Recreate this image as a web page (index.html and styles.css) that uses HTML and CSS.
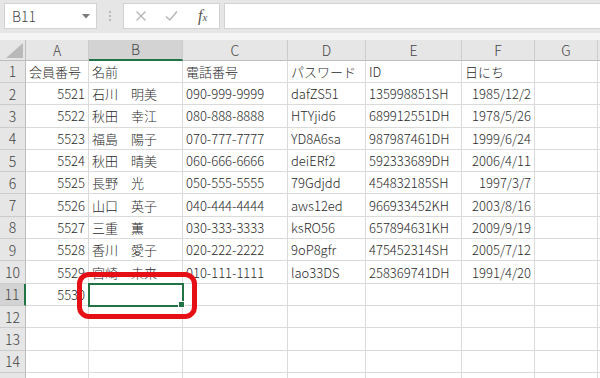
FILE: index.html
```html
<!DOCTYPE html>
<html lang="ja">
<head>
    <meta charset="UTF-8">
    <title>会員名簿</title>
    <link rel="stylesheet" href="styles.css">
</head>
<body>
    <div class="toolbar">
        <div class="name-box">
            <span>B11</span>
            <svg class="drop" width="8" height="5" viewBox="0 0 8 5"><polygon points="0,0 8,0 4,4.5" fill="#7a7a7a"/></svg>
        </div>
        <div class="grip">
            <svg width="4" height="12" viewBox="0 0 4 12"><circle cx="2" cy="2" r="1" fill="#a8a8a8"/><circle cx="2" cy="6" r="1" fill="#a8a8a8"/><circle cx="2" cy="10" r="1" fill="#a8a8a8"/></svg>
        </div>
        <div class="fx-box">
            <svg width="12" height="12" viewBox="0 0 12 12"><path d="M1.5 1.5 L10.5 10.5 M10.5 1.5 L1.5 10.5" stroke="#b4b4b4" stroke-width="1.3" fill="none"/></svg>
            <svg width="13" height="12" viewBox="0 0 13 12"><path d="M1 6.5 L4.8 10 L12 1.5" stroke="#b4b4b4" stroke-width="1.4" fill="none"/></svg>
            <span class="fx">f<span>x</span></span>
        </div>
        <div class="formula"></div>
    </div>
    <div class="gap"></div>

    <div class="sheet-wrap">
        <div class="sheet">
            <div class="corner"><svg width="17" height="15" viewBox="0 0 17 15"><polygon points="17,0 17,15 0,15" fill="#b9b9b9"/></svg></div>
            <div class="ch">A</div><div class="ch sel">B</div><div class="ch">C</div><div class="ch">D</div><div class="ch">E</div><div class="ch">F</div><div class="ch">G</div><div class="ch"></div>

            <div class="rh">1</div><div class="c">会員番号</div><div class="c">名前</div><div class="c">電話番号</div><div class="c">パスワード</div><div class="c">ID</div><div class="c">日にち</div><div class="c"></div><div class="c"></div>
            <div class="rh">2</div><div class="c r">5521</div><div class="c">石川　明美</div><div class="c">090-999-9999</div><div class="c">dafZS51</div><div class="c">135998851SH</div><div class="c r">1985/12/2</div><div class="c"></div><div class="c"></div>
            <div class="rh">3</div><div class="c r">5522</div><div class="c">秋田　幸江</div><div class="c">080-888-8888</div><div class="c">HTYjid6</div><div class="c">689912551DH</div><div class="c r">1978/5/26</div><div class="c"></div><div class="c"></div>
            <div class="rh">4</div><div class="c r">5523</div><div class="c">福島　陽子</div><div class="c">070-777-7777</div><div class="c">YD8A6sa</div><div class="c">987987461DH</div><div class="c r">1999/6/24</div><div class="c"></div><div class="c"></div>
            <div class="rh">5</div><div class="c r">5524</div><div class="c">秋田　晴美</div><div class="c">060-666-6666</div><div class="c">deiERf2</div><div class="c">592333689DH</div><div class="c r">2006/4/11</div><div class="c"></div><div class="c"></div>
            <div class="rh">6</div><div class="c r">5525</div><div class="c">長野　光</div><div class="c">050-555-5555</div><div class="c">79Gdjdd</div><div class="c">454832185SH</div><div class="c r">1997/3/7</div><div class="c"></div><div class="c"></div>
            <div class="rh">7</div><div class="c r">5526</div><div class="c">山口　英子</div><div class="c">040-444-4444</div><div class="c">aws12ed</div><div class="c">966933452KH</div><div class="c r">2003/8/16</div><div class="c"></div><div class="c"></div>
            <div class="rh">8</div><div class="c r">5527</div><div class="c">三重　薫</div><div class="c">030-333-3333</div><div class="c">ksRO56</div><div class="c">657894631KH</div><div class="c r">2009/9/19</div><div class="c"></div><div class="c"></div>
            <div class="rh">9</div><div class="c r">5528</div><div class="c">香川　愛子</div><div class="c">020-222-2222</div><div class="c">9oP8gfr</div><div class="c">475452314SH</div><div class="c r">2005/7/12</div><div class="c"></div><div class="c"></div>
            <div class="rh">10</div><div class="c r">5529</div><div class="c">宮崎　未来</div><div class="c">010-111-1111</div><div class="c">lao33DS</div><div class="c">258369741DH</div><div class="c r">1991/4/20</div><div class="c"></div><div class="c"></div>
            <div class="rh sel">11</div><div class="c r">5530</div><div class="c active"></div><div class="c"></div><div class="c"></div><div class="c"></div><div class="c"></div><div class="c"></div><div class="c"></div>
            <div class="rh">12</div><div class="c"></div><div class="c"></div><div class="c"></div><div class="c"></div><div class="c"></div><div class="c"></div><div class="c"></div><div class="c"></div>
            <div class="rh">13</div><div class="c"></div><div class="c"></div><div class="c"></div><div class="c"></div><div class="c"></div><div class="c"></div><div class="c"></div><div class="c"></div>
            <div class="rh">14</div><div class="c"></div><div class="c"></div><div class="c"></div><div class="c"></div><div class="c"></div><div class="c"></div><div class="c"></div><div class="c"></div>
            <div class="rh"></div><div class="c"></div><div class="c"></div><div class="c"></div><div class="c"></div><div class="c"></div><div class="c"></div><div class="c"></div><div class="c"></div>
        </div>
        <div class="mark"></div>
    </div>
</body>
</html>
```

FILE: styles.css
```css
* {
    margin: 0;
    padding: 0;
    box-sizing: border-box;
}

body {
    width: 600px;
    height: 378px;
    overflow: hidden;
    background: #fff;
    font-family: "Noto Sans CJK JP", "Noto Sans", sans-serif;
    font-weight: 300;
    color: #222;
}

/* formula bar */
.toolbar {
    height: 33px;
    background: #e6e6e6;
    display: flex;
    align-items: flex-start;
    padding: 3px 0 0 4px;
}

.name-box {
    width: 93px;
    height: 26px;
    background: #fff;
    border: 1px solid #d2d2d2;
    display: flex;
    align-items: center;
    justify-content: space-between;
    padding: 0 6px 0 7px;
    font-size: 14px;
    color: #444;
}

.grip {
    width: 26px;
    height: 26px;
    display: flex;
    align-items: center;
    justify-content: center;
}

.fx-box {
    width: 97px;
    height: 26px;
    background: #fff;
    border: 1px solid #d2d2d2;
    display: flex;
    align-items: center;
    padding: 0 10px 0 11px;
    gap: 18px;
}

.fx {
    font-family: "Liberation Serif", serif;
    font-style: italic;
    font-weight: 400;
    font-size: 16px;
    color: #555;
    margin-left: 2px;
}

.fx span {
    font-size: 11px;
}

.formula {
    flex: 1;
    height: 26px;
    margin-left: 4px;
    background: #fff;
    border: 1px solid #d2d2d2;
    border-right: none;
}

.gap {
    height: 7px;
    background: #f4f4f4;
}

/* grid */
.sheet-wrap {
    position: relative;
}

.sheet {
    display: grid;
    grid-template-columns: 26px 63px 94px 105px 78px 96px 73px 63px 63px;
    grid-template-rows: 20.7px repeat(15, 22.3px);
    width: 661px;
}

.corner,
.ch,
.rh {
    background: #e6e6e6;
    color: #444;
    font-size: 14px;
    display: flex;
    align-items: center;
    justify-content: center;
}

.corner {
    border-right: 1px solid #bdbdbd;
    border-bottom: 1px solid #bdbdbd;
    align-items: flex-end;
    justify-content: flex-end;
    padding: 0 2px 2px 0;
}

.ch {
    border-right: 1px solid #cbcbcb;
    border-bottom: 1px solid #bdbdbd;
}

.rh {
    border-right: 1px solid #bdbdbd;
    border-bottom: 1px solid #cbcbcb;
}

.ch.sel {
    background: #d3d3d3;
    border-bottom: 2px solid #217346;
}

.rh.sel {
    background: #d3d3d3;
    border-right: 2px solid #217346;
}

.c {
    border-right: 1px solid #dadada;
    border-bottom: 1px solid #dadada;
    padding: 0 3px;
    font-size: 13px;
    color: #2a2a2a;
    display: flex;
    align-items: center;
    white-space: nowrap;
    overflow: hidden;
}

.c.r {
    justify-content: flex-end;
}

.c.active {
    position: relative;
    overflow: visible;
    outline: 2px solid #217346;
    outline-offset: -1px;
}

.c.active::after {
    content: "";
    position: absolute;
    right: -3px;
    bottom: -3px;
    width: 5px;
    height: 5px;
    background: #217346;
    border: 1px solid #fff;
}

/* red highlight drawn over the sheet */
.mark {
    position: absolute;
    left: 77px;
    top: 232px;
    width: 120px;
    height: 47px;
    border: 5px solid #e60f16;
    border-radius: 12px;
}
```
